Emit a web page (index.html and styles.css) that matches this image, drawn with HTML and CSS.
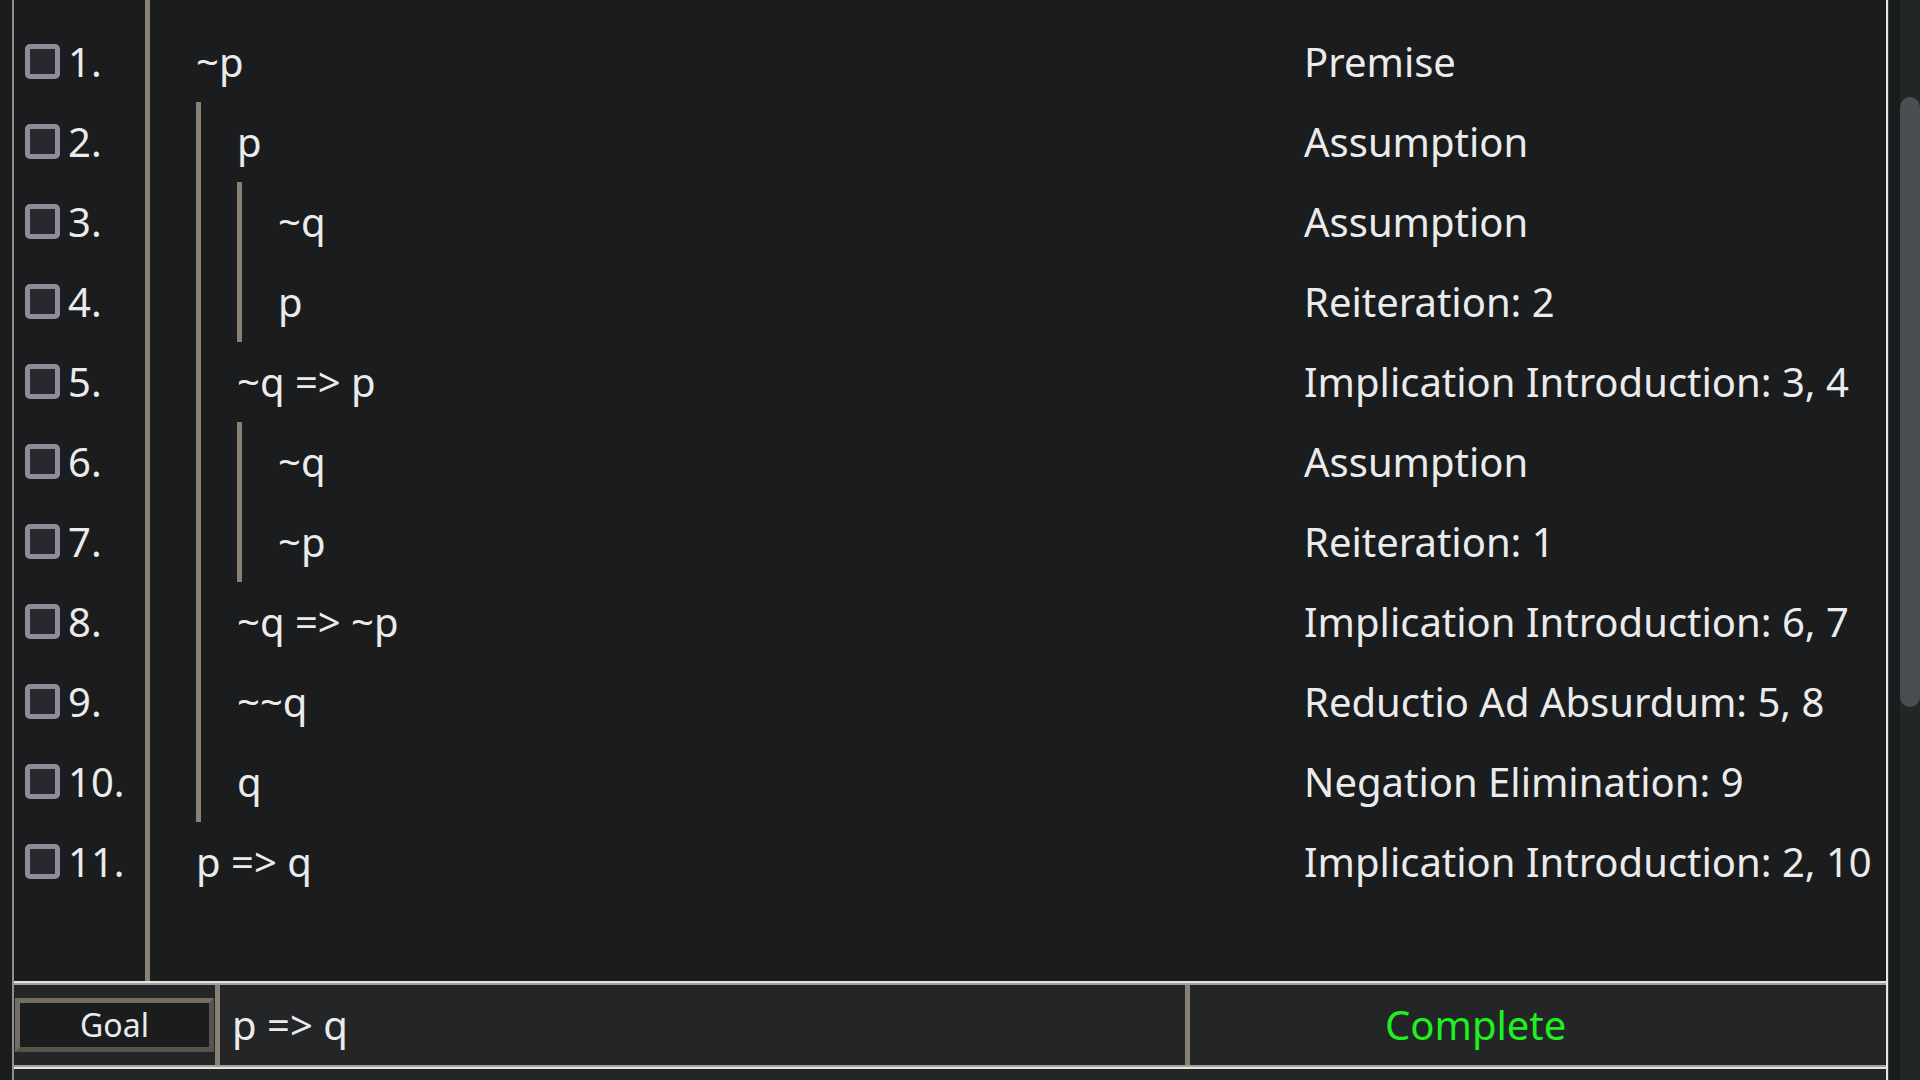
FILE: index.html
```html
<!DOCTYPE html>
<html lang="en">
<head>
<meta charset="utf-8">
<title>Proof</title>
<link rel="stylesheet" href="styles.css">
</head>
<body>
<div class="window">
  <div class="app">
    <div class="main">
      <div class="gutter">
        <div class="num-row"><span class="check"></span><span class="num">1.</span></div>
        <div class="num-row"><span class="check"></span><span class="num">2.</span></div>
        <div class="num-row"><span class="check"></span><span class="num">3.</span></div>
        <div class="num-row"><span class="check"></span><span class="num">4.</span></div>
        <div class="num-row"><span class="check"></span><span class="num">5.</span></div>
        <div class="num-row"><span class="check"></span><span class="num">6.</span></div>
        <div class="num-row"><span class="check"></span><span class="num">7.</span></div>
        <div class="num-row"><span class="check"></span><span class="num">8.</span></div>
        <div class="num-row"><span class="check"></span><span class="num">9.</span></div>
        <div class="num-row"><span class="check"></span><span class="num">10.</span></div>
        <div class="num-row"><span class="check"></span><span class="num">11.</span></div>
      </div>
      <div class="proof">
        <div class="line"><div class="formula">~p</div><div class="just">Premise</div></div>
        <div class="line"><div class="formula"><div class="sub"><span>p</span></div></div><div class="just">Assumption</div></div>
        <div class="line"><div class="formula"><div class="sub"><div class="sub"><span>~q</span></div></div></div><div class="just">Assumption</div></div>
        <div class="line"><div class="formula"><div class="sub"><div class="sub"><span>p</span></div></div></div><div class="just">Reiteration: 2</div></div>
        <div class="line"><div class="formula"><div class="sub"><span>~q =&gt; p</span></div></div><div class="just">Implication Introduction: 3, 4</div></div>
        <div class="line"><div class="formula"><div class="sub"><div class="sub"><span>~q</span></div></div></div><div class="just">Assumption</div></div>
        <div class="line"><div class="formula"><div class="sub"><div class="sub"><span>~p</span></div></div></div><div class="just">Reiteration: 1</div></div>
        <div class="line"><div class="formula"><div class="sub"><span>~q =&gt; ~p</span></div></div><div class="just">Implication Introduction: 6, 7</div></div>
        <div class="line"><div class="formula"><div class="sub"><span>~~q</span></div></div><div class="just">Reductio Ad Absurdum: 5, 8</div></div>
        <div class="line"><div class="formula"><div class="sub"><span>q</span></div></div><div class="just">Negation Elimination: 9</div></div>
        <div class="line"><div class="formula">p =&gt; q</div><div class="just">Implication Introduction: 2, 10</div></div>
      </div>
    </div>
    <div class="goalbar">
      <div class="goal-btn-cell"><div class="goal-btn">Goal</div></div>
      <div class="goal-text">p =&gt; q</div>
      <div class="status">Complete</div>
    </div>
    <div class="footer"></div>
  </div>
  <div class="scrollbar"><div class="thumb"></div></div>
</div>
</body>
</html>
```

FILE: styles.css
```css
html, body {
  margin: 0;
  padding: 0;
  background: #1b1c1e;
  width: 1920px;
  height: 1080px;
  overflow: hidden;
  font-family: "Noto Sans", "Open Sans", sans-serif;
  color: #ebebeb;
}

.window {
  display: flex;
  height: 1080px;
  padding-left: 12px;
  box-sizing: border-box;
}

.app {
  width: 1876px;
  box-sizing: border-box;
  border-left: 2px solid #8f8f8f;
  border-right: 2px solid #e8e6e2;
  box-shadow: 1px 0 0 #3c3e40;
  display: flex;
  flex-direction: column;
  height: 1080px;
}

.main {
  height: 981px;
  display: flex;
  background: #1b1c1e;
}

.gutter {
  width: 131px;
  border-right: 5px solid #898174;
  padding-top: 22px;
  flex: none;
}

.num-row {
  height: 80px;
  display: flex;
  align-items: center;
  font-size: 40px;
  line-height: 80px;
}

.check {
  width: 25px;
  height: 25px;
  border: 5px solid #8e8c98;
  border-radius: 5px;
  background: #29282f;
  margin-left: 11px;
  margin-right: 8px;
  margin-top: -1px;
  flex: none;
}

.proof {
  flex: 1;
  padding-top: 22px;
  padding-left: 46px;
}

.line {
  display: grid;
  grid-template-columns: 1108px 1fr;
  height: 80px;
  font-size: 40px;
  line-height: 80px;
  white-space: nowrap;
}

.formula {
  display: flex;
  height: 80px;
}

.sub {
  display: flex;
  border-left: 5px solid #898174;
  padding-left: 36px;
  height: 80px;
}

.goalbar {
  height: 80px;
  border-top: 2px solid #e6e3de;
  border-bottom: 2px solid #e6e3de;
  box-shadow: inset 0 2px 0 #a2a09c, inset 0 -2px 0 #a2a09c;
  padding: 2px 0;
  display: flex;
  background: #232527;
}

.goal-btn-cell {
  width: 201px;
  border-right: 5px solid #888074;
  display: flex;
  align-items: center;
  flex: none;
}

.goal-btn {
  margin-left: 1px;
  width: 189px;
  height: 44px;
  border: 5px solid;
  border-color: #736d63 #5a534b #5a534b #736d63;
  background: #1b1c1e;
  font-size: 32px;
  line-height: 44px;
  text-align: center;
  color: #ebebeb;
}

.goal-text {
  width: 953px;
  border-right: 5px solid #888074;
  padding-left: 12px;
  font-size: 40px;
  line-height: 80px;
  flex: none;
}

.status {
  flex: 1;
  padding-left: 195px;
  font-size: 40px;
  line-height: 80px;
  color: #1ff01f;
}

.footer {
  flex: 1;
  background: #232527;
}

.scrollbar {
  margin-left: 12px;
  width: 20px;
  height: 1080px;
  background: #222627;
  flex: none;
}

.thumb {
  margin-top: 97px;
  height: 610px;
  background: #4a4e51;
  border-radius: 10px;
}
```
